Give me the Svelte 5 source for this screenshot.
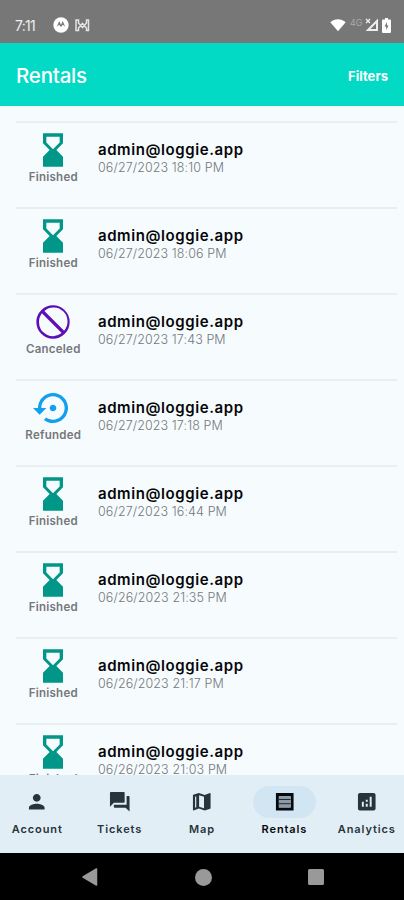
<script>
  const icons = {
    Finished: 'M18 22l-.01-6L14 12l3.99-4.01L18 2H6v6l4 4-4 3.99V22h12zM8 7.5V4h8v3.5l-4 4-4-4z',
    Canceled: 'M12 2a10 10 0 1 0 0 20 10 10 0 0 0 0-20zM3.6 12c0-1.92.65-3.68 1.74-5.19l11.85 11.85A8.4 8.4 0 0 1 3.6 12zm15.06 5.19L6.81 5.34A8.4 8.4 0 0 1 18.66 17.19z',
    Refunded: 'M14 12c0-1.1-.9-2-2-2s-2 .9-2 2 .9 2 2 2 2-.9 2-2zm-2-9c-4.97 0-9 4.03-9 9H0l4 4 4-4H5c0-3.87 3.13-7 7-7s7 3.13 7 7-3.13 7-7 7c-1.51 0-2.91-.49-4.06-1.3l-1.42 1.44C8.04 20.3 9.94 21 12 21c4.97 0 9-4.03 9-9s-4.03-9-9-9z'
  };
  const rentals = [
    ['Finished', '06/27/2023 18:10 PM'],
    ['Finished', '06/27/2023 18:06 PM'],
    ['Canceled', '06/27/2023 17:43 PM'],
    ['Refunded', '06/27/2023 17:18 PM'],
    ['Finished', '06/27/2023 16:44 PM'],
    ['Finished', '06/26/2023 21:35 PM'],
    ['Finished', '06/26/2023 21:17 PM'],
    ['Finished', '06/26/2023 21:03 PM']
  ];
  const tabs = [
    ['Account', 'M12 12c2.21 0 4-1.79 4-4s-1.79-4-4-4-4 1.79-4 4 1.79 4 4 4zm0 2c-2.67 0-8 1.34-8 4v2h16v-2c0-2.66-5.33-4-8-4z'],
    ['Tickets', 'M21 6h-2v9H6v2c0 .55.45 1 1 1h11l4 4V7c0-.55-.45-1-1-1zm-4 6V3c0-.55-.45-1-1-1H3c-.55 0-1 .45-1 1v14l4-4h10c.55 0 1-.45 1-1z'],
    ['Map', 'M20.5 3l-.16.03L15 5.1 9 3 3.36 4.9c-.21.07-.36.25-.36.48V20.5c0 .28.22.5.5.5l.16-.03L9 18.9l6 2.1 5.64-1.9c.21-.07.36-.25.36-.48V3.5c0-.28-.22-.5-.5-.5zM9.3 5.3l5 1.7v11.7l-5-1.7zM5.2 7l1.2-.5v11l-1.2.5z'],
    ['Rentals', 'M3 3h18v18H3zM6 6.4v11.4h12V6.4z'],
    ['Analytics', 'M19 3H5c-1.1 0-2 .9-2 2v14c0 1.1.9 2 2 2h14c1.1 0 2-.9 2-2V5c0-1.1-.9-2-2-2zM9 17H7v-5h2v5zm4 0h-2v-3h2v3zm0-5h-2v-2h2v2zm4 5h-2V7h2v10z']
  ];
</script>

<div class="screen">
  <div class="status">
    <span class="time">7:11</span>
    <svg class="moto" width="16" height="16" viewBox="0 0 16 16"><circle cx="8" cy="8" r="7.7" fill="#fff" /><path d="M3.8 9.8 6.3 4l1.7 4 1.7-4 2.5 5.8-2.3-2L8 10 6.1 7.8z" fill="#777" /></svg>
    <svg class="signal" width="15" height="13" viewBox="0 0 15 13" fill="none" stroke="#e4e4e4" stroke-width="1.5"><path d="M3.5 1H1v10.5h2.5V9L7.5 4.5l4 4.5v2.5h2V1h-2v3L7.5 8.5 3.5 4z" /></svg>
    <span class="spacer"></span>
    <svg class="wifi" width="16" height="14" viewBox="0 0 16 14"><path d="M.3 4.2C4.8.2 11.2.2 15.7 4.2L8 13.3z" fill="#fff" /></svg>
    <span class="net">4G</span>
    <svg class="cell" width="14" height="14" viewBox="0 0 14 14"><path d="M12 3v9H3z" fill="none" stroke="#eee" stroke-width="2" /><path d="m1 1 4 4M5 1 1 5" stroke="#eee" stroke-width="1.4" /></svg>
    <svg width="9" height="15" viewBox="0 0 9 15"><path d="M3 0h3v1.5h2q1 0 1 1V14q0 1-1 1H1q-1 0-1-1V2.5q0-1 1-1h2z" fill="#fff" /><path d="M5 4 2.5 8.6h1.7V12L6.6 7.5H5z" fill="#777" /></svg>
  </div>

  <header>
    <h1>Rentals</h1>
    <span class="filters">Filters</span>
  </header>

  <main>
    {#each rentals as [state, date]}
      <article>
        <div class="state {state.toLowerCase()}">
          <svg width="40" height="40" viewBox="0 0 24 24"><path d={icons[state]} fill="currentColor" /></svg>
          <span>{state}</span>
        </div>
        <div class="info">
          <strong>admin@loggie.app</strong>
          <span>{date}</span>
        </div>
      </article>
    {/each}
  </main>

  <nav>
    {#each tabs as [label, icon]}
      <div class="tab" class:active={label === 'Rentals'}>
        <div class="pill">
          <svg width="23.5" height="23.5" viewBox="0 0 24 24">
            <path d={icon} fill="currentColor" fill-rule="evenodd" />
            {#if label === 'Rentals'}
              <path d="M6 6.4h12v11.4H6z" fill="#8b9aa5" />
              <path d="M6 9.7h12M6 14h12" stroke="#1c272e" stroke-width="1" />
            {/if}
          </svg>
        </div>
        <span>{label}</span>
      </div>
    {/each}
  </nav>

  <div class="system">
    <svg width="16" height="18" viewBox="0 0 16 18"><path d="M14.5 1v16L1 9z" fill="#999" stroke="#999" stroke-width="1.5" stroke-linejoin="round" /></svg>
    <i class="home"></i>
    <i class="recent"></i>
  </div>
</div>

<style>
  .screen {
    width: 404px;
    height: 900px;
    display: flex;
    flex-direction: column;
    overflow: hidden;
    background: #f6fbfe;
    font-family: Inter, "Noto Sans", sans-serif;
  }
  .status {
    flex: none;
    height: 43px;
    box-sizing: border-box;
    padding: 7px 13px 0 15px;
    display: flex;
    align-items: center;
    background: #777;
    color: #eee;
  }
  .time { width: 38px; font-size: 14px; letter-spacing: -0.7px; }
  .signal { margin-left: 6px; }
  .spacer { flex: 1; }
  .wifi { margin-right: 1px; }
  .net { margin: -5px 2px 0 3px; width: 13px; font-size: 9px; color: #aaa; }
  .cell { margin-right: 3px; }
  header {
    flex: none;
    height: 63px;
    box-sizing: border-box;
    padding: 2px 16px 0;
    display: flex;
    align-items: center;
    justify-content: space-between;
    background: #03dac5;
    color: #fff;
  }
  h1 { margin: 0; font-size: 20.5px; font-weight: 500; letter-spacing: -0.2px; }
  .filters { font-size: 13px; font-weight: 700; letter-spacing: 0.02px; }
  main {
    flex: 1;
    min-height: 0;
    overflow: hidden;
    padding: 15px 7px 0 16px;
  }
  article {
    height: 86px;
    box-sizing: border-box;
    border-top: 2px solid #e9eef1;
    display: flex;
  }
  .state {
    width: 74.6px;
    padding-top: 7px;
    display: flex;
    flex-direction: column;
    align-items: center;
  }
  .state span {
    font-size: 11.5px;
    line-height: 14px;
    font-weight: 600;
    letter-spacing: 0.25px;
    color: #757779;
  }
  .state svg { display: block; }
  .finished { color: #009688; }
  .canceled { color: #5b0fb4; }
  .refunded { color: #129fec; }
  .info {
    padding: 17px 0 0 7.4px;
    display: flex;
    flex-direction: column;
    white-space: nowrap;
  }
  .info strong {
    font-size: 15px;
    line-height: 20px;
    font-weight: 600;
    letter-spacing: 0.58px;
    color: #050607;
  }
  .info span {
    font-size: 12.5px;
    line-height: 15px;
    font-weight: 300;
    letter-spacing: 0.1px;
    color: #74787a;
  }
  nav {
    flex: none;
    height: 78px;
    margin: 0 -4px;
    display: flex;
    background: #e2eef6;
    color: #27343b;
  }
  .tab {
    flex: 1 1 0;
    padding-top: 11px;
    display: flex;
    flex-direction: column;
    align-items: center;
  }
  .pill {
    width: 63px;
    height: 32px;
    border-radius: 16px;
    display: flex;
    align-items: center;
    justify-content: center;
  }
  .active { color: #05090c; }
  .active .pill { background: #d1e5f3; }
  .tab span {
    margin-top: 4px;
    font-size: 11px;
    line-height: 15px;
    font-weight: 600;
    letter-spacing: 0.9px;
  }
  .system {
    flex: none;
    height: 47px;
    box-sizing: border-box;
    padding: 1px 80px 0 82px;
    display: flex;
    align-items: center;
    justify-content: space-between;
    background: #000;
  }
  .home { width: 17px; height: 17px; border-radius: 50%; background: #999; }
  .recent { width: 16px; height: 16px; border-radius: 1.5px; background: #999; }
</style>
